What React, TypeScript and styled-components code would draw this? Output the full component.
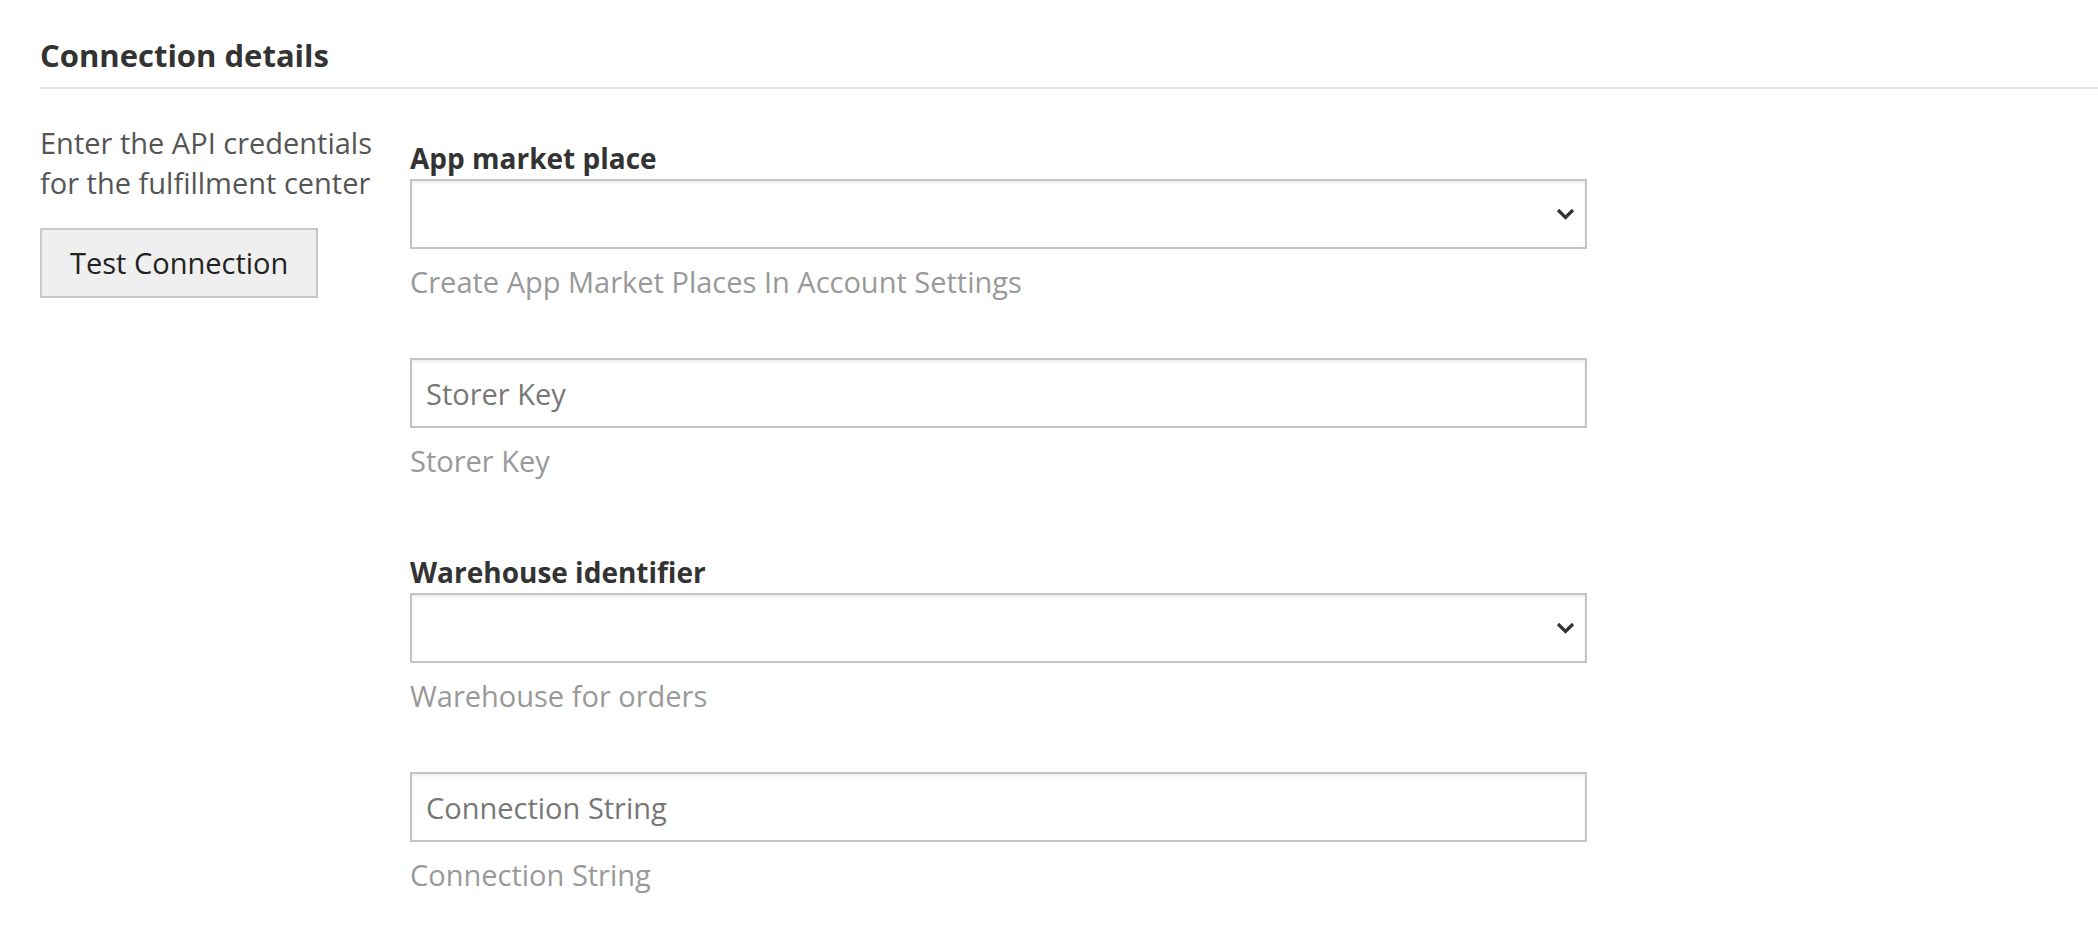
import React from 'react';
import styled, { createGlobalStyle } from 'styled-components';

const GlobalStyle = createGlobalStyle`
  html, body {
    margin: 0;
    padding: 0;
    background: #ffffff;
  }
  body {
    font-family: "Open Sans", "Liberation Sans", Arial, sans-serif;
    color: #333333;
  }
  * { box-sizing: border-box; }
`

const Page = styled.div`
  padding: 33px 0 0 40px;
`

const SectionTitle = styled.h2`
  margin: 0;
  padding-bottom: 10px;
  font-size: 31px;
  line-height: 44px;
  font-weight: 700;
  color: #333333;
  border-bottom: 2px solid #e5e5e5;
`

const Body = styled.div`
  display: flex;
  align-items: flex-start;
  padding-top: 34px;
`

const Aside = styled.div`
  width: 352px;
  flex: none;
  margin-right: 18px;
`

const Description = styled.p`
  margin: 0;
  font-size: 29px;
  line-height: 40px;
  color: #555555;
`

const TestButton = styled.button`
  margin-top: 25px;
  height: 70px;
  padding: 0 28px;
  font-family: inherit;
  font-size: 29px;
  line-height: 40px;
  color: #222222;
  background: #efefef;
  border: 2px solid #c8c8c8;
  border-radius: 0;
  cursor: pointer;
`

const Form = styled.div`
  width: 1177px;
  flex: none;
  display: flex;
  flex-direction: column;
  gap: 56px;
`

const Field = styled.div`
  display: flex;
  flex-direction: column;
`

const Label = styled.label`
  display: block;
  padding-top: 15px;
  margin-bottom: 1px;
  font-size: 28px;
  line-height: 40px;
  font-weight: 700;
  color: #333333;
`

const controlBox = `
  display: block;
  width: 100%;
  height: 70px;
  margin: 0;
  padding: 0 14px;
  font-family: "Open Sans", "Liberation Sans", Arial, sans-serif;
  font-size: 29px;
  line-height: 40px;
  color: #333333;
  background: #ffffff;
  border: 2px solid #c4c4c4;
  border-radius: 0;
  box-shadow: inset 0 2px 3px rgba(0, 0, 0, 0.07);
  outline: none;
`

const TextInput = styled.input`
  ${controlBox}
  &::placeholder {
    color: #777777;
    opacity: 1;
  }
`

const SelectWrap = styled.div`
  position: relative;
`

const Select = styled.select`
  ${controlBox}
  appearance: none;
  -webkit-appearance: none;
`

const Chevron = styled.svg`
  position: absolute;
  right: 12px;
  top: 50%;
  width: 19px;
  height: 12px;
  margin-top: -6px;
  pointer-events: none;
`

const Help = styled.div`
  margin-top: 13px;
  font-size: 29px;
  line-height: 40px;
  color: #999999;
`

const Dropdown = ({ id }: { id: string }) => (
  <SelectWrap>
    <Select id={id} defaultValue="">
      <option value=""></option>
    </Select>
    <Chevron viewBox="0 0 19 12">
      <polyline points="2,2 9.5,9.5 17,2" fill="none" stroke="#333333" strokeWidth="3.2" />
    </Chevron>
  </SelectWrap>
);

const App = () => {
  return (
    <>
      <GlobalStyle />
      <Page>
        <SectionTitle>Connection details</SectionTitle>
        <Body>
          <Aside>
            <Description>Enter the API credentials for the fulfillment center</Description>
            <TestButton>Test Connection</TestButton>
          </Aside>
          <Form>
            <Field>
              <Label htmlFor="marketplace">App market place</Label>
              <Dropdown id="marketplace" />
              <Help>Create App Market Places In Account Settings</Help>
            </Field>
            <Field>
              <TextInput type="text" name="storer_key" placeholder="Storer Key" />
              <Help>Storer Key</Help>
            </Field>
            <Field>
              <Label htmlFor="warehouse">Warehouse identifier</Label>
              <Dropdown id="warehouse" />
              <Help>Warehouse for orders</Help>
            </Field>
            <Field>
              <TextInput type="text" name="connection_string" placeholder="Connection String" />
              <Help>Connection String</Help>
            </Field>
          </Form>
        </Body>
      </Page>
    </>
  );
}

export default App;
